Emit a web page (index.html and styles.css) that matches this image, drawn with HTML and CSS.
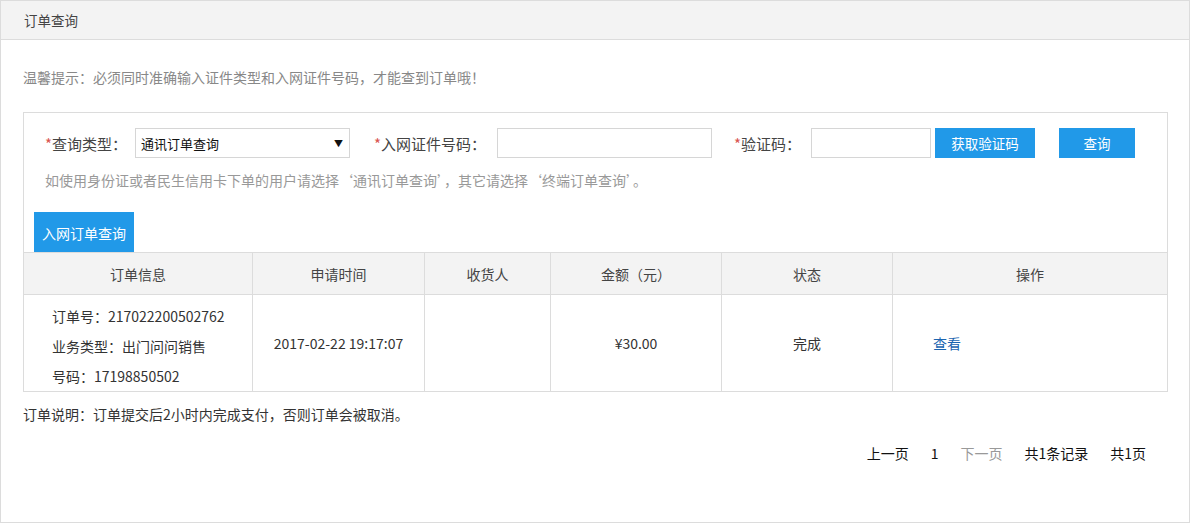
FILE: index.html
```html
<!DOCTYPE html>
<html>
<head>
	<meta charset="utf-8">
	<title>订单查询</title>
	<link rel="stylesheet" href="styles.css">
</head>
<body>

	<div id="boxPanel">
		<div id="boxPanelHead">订单查询</div>

		<div id="boxPanelBody">
			<div class="lblTip">温馨提示：必须同时准确输入证件类型和入网证件号码，才能查到订单哦！</div>

			<div id="boxQuery">
				<div class="rowForm">
					<span class="lblField"><i>*</i>查询类型：</span>
					<div class="selType">
						<span>通讯订单查询</span>
						<span class="arrow">▼</span>
					</div>
					<span class="lblField lblId"><i>*</i>入网证件号码：</span>
					<input class="txtInput txtId" type="text">
					<span class="lblField lblCode"><i>*</i>验证码：</span>
					<input class="txtInput txtCode" type="text">
					<button class="btnBlue btnGetCode">获取验证码</button>
					<button class="btnBlue btnSearch">查询</button>
				</div>
				<div class="lblHint">如使用身份证或者民生信用卡下单的用户请选择‘通讯订单查询’，其它请选择‘终端订单查询’。</div>
				<div class="tabOrder">入网订单查询</div>
			</div>

			<table id="tblOrders">
				<thead>
					<tr>
						<th class="colInfo">订单信息</th>
						<th class="colTime">申请时间</th>
						<th class="colName">收货人</th>
						<th class="colMoney">金额（元）</th>
						<th class="colState">状态</th>
						<th>操作</th>
					</tr>
				</thead>
				<tbody>
					<tr>
						<td class="cellInfo">
							<div>订单号：217022200502762</div>
							<div>业务类型：出门问问销售</div>
							<div>号码：17198850502</div>
						</td>
						<td>2017-02-22 19:17:07</td>
						<td></td>
						<td>¥30.00</td>
						<td>完成</td>
						<td class="cellAction"><a href="#">查看</a></td>
					</tr>
				</tbody>
			</table>

			<div class="lblNote">订单说明：订单提交后2小时内完成支付，否则订单会被取消。</div>

			<div id="boxPager">
				<span>上一页</span>
				<span>1</span>
				<span class="off">下一页</span>
				<span>共1条记录</span>
				<span>共1页</span>
			</div>
		</div>
	</div>

</body>
</html>
```

FILE: styles.css
```css
*{
	margin: 0px;
	padding: 0px;
	box-sizing: border-box;
}

body{
	width: 1190px;
	height: 523px;
	overflow: hidden;
	background-color: white;
	font-family: "Noto Sans CJK SC", "Noto Sans", sans-serif;
	font-size: 14px;
	color: #333;
}

#boxPanel{
	width: 1190px;
	height: 523px;
	border: 1px solid #dcdcdc;
}

#boxPanelHead{
	height: 39px;
	line-height: 38px;
	padding-left: 23px;
	background-color: #f3f3f3;
	border-bottom: 1px solid #dcdcdc;
	font-size: 13.5px;
	color: #444;
}

#boxPanelBody{
	padding: 0px 21px 0px 22px;
}

.lblTip{
	margin-top: 27px;
	line-height: 20px;
	color: #888;
}

#boxQuery{
	margin-top: 25px;
	border: 1px solid #dcdcdc;
	border-bottom: none;
	padding: 15px 10px 0px 10px;
}

.rowForm{
	display: flex;
	align-items: center;
	height: 30px;
	padding-left: 11px;
}
.lblField{
	color: #444;
	font-size: 15px;
}
.lblField i{
	font-style: normal;
	color: #d9534f;
}
.lblId{
	margin-left: 24px;
}
.lblCode{
	margin-left: 22px;
}

.selType{
	display: flex;
	justify-content: space-between;
	align-items: center;
	width: 215px;
	height: 30px;
	margin-left: 8px;
	padding: 0px 6px 0px 5px;
	border: 1px solid #d6d6d6;
	font-size: 13px;
	color: #111;
}
.selType .arrow{
	font-size: 9px;
	color: #111;
}

.txtInput{
	height: 30px;
	border: 1px solid #d6d6d6;
	outline: none;
}
.txtId{
	width: 215px;
	margin-left: 11px;
}
.txtCode{
	width: 120px;
	margin-left: 10px;
}

.btnBlue{
	height: 30px;
	border: none;
	background-color: #2199e8;
	color: white;
	font-family: "Noto Sans CJK SC", sans-serif;
	font-size: 13.5px;
}
.btnGetCode{
	width: 100px;
	margin-left: 4px;
}
.btnSearch{
	width: 76px;
	margin-left: 24px;
}

.lblHint{
	margin-top: 12px;
	padding-left: 11px;
	line-height: 20px;
	font-size: 14px;
	color: #999;
}

.tabOrder{
	display: inline-block;
	margin-top: 22px;
	width: 100px;
	height: 40px;
	line-height: 42px;
	text-align: center;
	background-color: #2199e8;
	color: white;
	font-size: 14px;
}

#tblOrders{
	width: 100%;
	border-collapse: collapse;
	font-size: 14px;
}
#tblOrders th, #tblOrders td{
	border: 1px solid #dcdcdc;
	text-align: center;
	font-weight: normal;
}
#tblOrders th{
	height: 42px;
	background-color: #f3f3f3;
	color: #444;
}
#tblOrders td{
	height: 97px;
	color: #333;
}
.colInfo{
	width: 229px;
}
.colTime{
	width: 172px;
}
.colName{
	width: 126px;
}
.colMoney{
	width: 171px;
}
.colState{
	width: 171px;
}
#tblOrders .cellInfo{
	text-align: left;
	padding: 6px 0px 0px 28px;
	line-height: 30px;
}
#tblOrders .cellAction{
	text-align: left;
	padding-left: 40px;
}
.cellAction a{
	color: #1a64b0;
	text-decoration: none;
}

.lblNote{
	margin-top: 12px;
	line-height: 20px;
}

#boxPager{
	display: flex;
	justify-content: flex-end;
	gap: 22px;
	margin-top: 19px;
	padding-right: 22px;
	line-height: 20px;
	color: #111;
}
#boxPager .off{
	color: #999;
}
```
